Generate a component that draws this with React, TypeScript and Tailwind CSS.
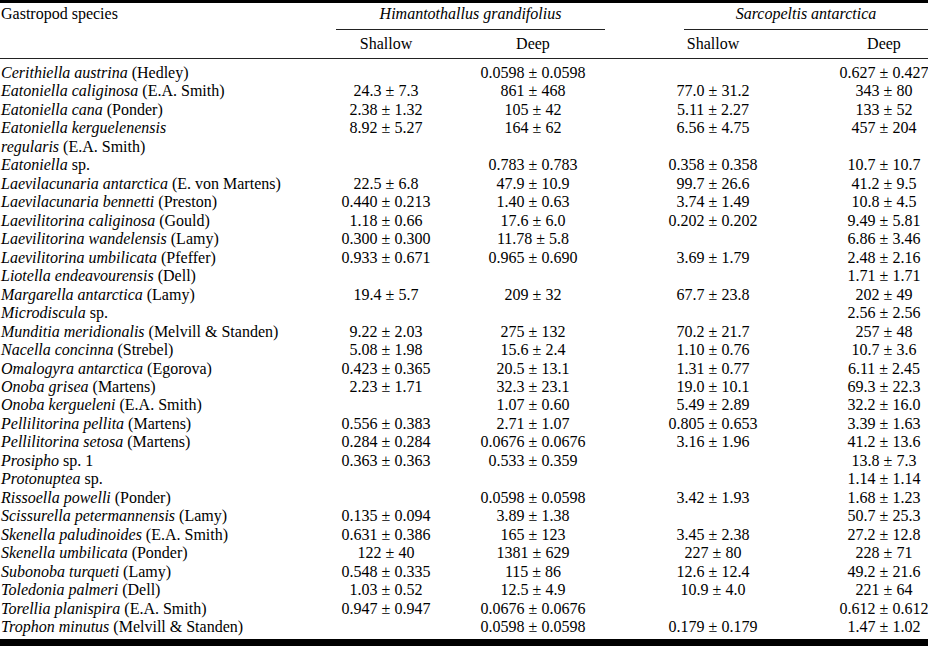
import React from "react";

type Row = { g: React.ReactNode; a: string; b: string; c: string; d: string };

const I = ({ children }: { children: React.ReactNode }) => <i>{children}</i>;

const rows: Row[] = [
  { g: <><I>Cerithiella austrina</I> (Hedley)</>, a: "", b: "0.0598 ± 0.0598", c: "", d: "0.627 ± 0.427" },
  { g: <><I>Eatoniella caliginosa</I> (E.A. Smith)</>, a: "24.3 ± 7.3", b: "861 ± 468", c: "77.0 ± 31.2", d: "343 ± 80" },
  { g: <><I>Eatoniella cana</I> (Ponder)</>, a: "2.38 ± 1.32", b: "105 ± 42", c: "5.11 ± 2.27", d: "133 ± 52" },
  { g: <><I>Eatoniella kerguelenensis</I><br /><I>regularis</I> (E.A. Smith)</>, a: "8.92 ± 5.27", b: "164 ± 62", c: "6.56 ± 4.75", d: "457 ± 204" },
  { g: <><I>Eatoniella</I> sp.</>, a: "", b: "0.783 ± 0.783", c: "0.358 ± 0.358", d: "10.7 ± 10.7" },
  { g: <><I>Laevilacunaria antarctica</I> (E. von Martens)</>, a: "22.5 ± 6.8", b: "47.9 ± 10.9", c: "99.7 ± 26.6", d: "41.2 ± 9.5" },
  { g: <><I>Laevilacunaria bennetti</I> (Preston)</>, a: "0.440 ± 0.213", b: "1.40 ± 0.63", c: "3.74 ± 1.49", d: "10.8 ± 4.5" },
  { g: <><I>Laevilitorina caliginosa</I> (Gould)</>, a: "1.18 ± 0.66", b: "17.6 ± 6.0", c: "0.202 ± 0.202", d: "9.49 ± 5.81" },
  { g: <><I>Laevilitorina wandelensis</I> (Lamy)</>, a: "0.300 ± 0.300", b: "11.78 ± 5.8", c: "", d: "6.86 ± 3.46" },
  { g: <><I>Laevilitorina umbilicata</I> (Pfeffer)</>, a: "0.933 ± 0.671", b: "0.965 ± 0.690", c: "3.69 ± 1.79", d: "2.48 ± 2.16" },
  { g: <><I>Liotella endeavourensis</I> (Dell)</>, a: "", b: "", c: "", d: "1.71 ± 1.71" },
  { g: <><I>Margarella antarctica</I> (Lamy)</>, a: "19.4 ± 5.7", b: "209 ± 32", c: "67.7 ± 23.8", d: "202 ± 49" },
  { g: <><I>Microdiscula</I> sp.</>, a: "", b: "", c: "", d: "2.56 ± 2.56" },
  { g: <><I>Munditia meridionalis</I> (Melvill &amp; Standen)</>, a: "9.22 ± 2.03", b: "275 ± 132", c: "70.2 ± 21.7", d: "257 ± 48" },
  { g: <><I>Nacella concinna</I> (Strebel)</>, a: "5.08 ± 1.98", b: "15.6 ± 2.4", c: "1.10 ± 0.76", d: "10.7 ± 3.6" },
  { g: <><I>Omalogyra antarctica</I> (Egorova)</>, a: "0.423 ± 0.365", b: "20.5 ± 13.1", c: "1.31 ± 0.77", d: "6.11 ± 2.45" },
  { g: <><I>Onoba grisea</I> (Martens)</>, a: "2.23 ± 1.71", b: "32.3 ± 23.1", c: "19.0 ± 10.1", d: "69.3 ± 22.3" },
  { g: <><I>Onoba kergueleni</I> (E.A. Smith)</>, a: "", b: "1.07 ± 0.60", c: "5.49 ± 2.89", d: "32.2 ± 16.0" },
  { g: <><I>Pellilitorina pellita</I> (Martens)</>, a: "0.556 ± 0.383", b: "2.71 ± 1.07", c: "0.805 ± 0.653", d: "3.39 ± 1.63" },
  { g: <><I>Pellilitorina setosa</I> (Martens)</>, a: "0.284 ± 0.284", b: "0.0676 ± 0.0676", c: "3.16 ± 1.96", d: "41.2 ± 13.6" },
  { g: <><I>Prosipho</I> sp. 1</>, a: "0.363 ± 0.363", b: "0.533 ± 0.359", c: "", d: "13.8 ± 7.3" },
  { g: <><I>Protonuptea</I> sp.</>, a: "", b: "", c: "", d: "1.14 ± 1.14" },
  { g: <><I>Rissoella powelli</I> (Ponder)</>, a: "", b: "0.0598 ± 0.0598", c: "3.42 ± 1.93", d: "1.68 ± 1.23" },
  { g: <><I>Scissurella petermannensis</I> (Lamy)</>, a: "0.135 ± 0.094", b: "3.89 ± 1.38", c: "", d: "50.7 ± 25.3" },
  { g: <><I>Skenella paludinoides</I> (E.A. Smith)</>, a: "0.631 ± 0.386", b: "165 ± 123", c: "3.45 ± 2.38", d: "27.2 ± 12.8" },
  { g: <><I>Skenella umbilicata</I> (Ponder)</>, a: "122 ± 40", b: "1381 ± 629", c: "227 ± 80", d: "228 ± 71" },
  { g: <><I>Subonoba turqueti</I> (Lamy)</>, a: "0.548 ± 0.335", b: "115 ± 86", c: "12.6 ± 12.4", d: "49.2 ± 21.6" },
  { g: <><I>Toledonia palmeri</I> (Dell)</>, a: "1.03 ± 0.52", b: "12.5 ± 4.9", c: "10.9 ± 4.0", d: "221 ± 64" },
  { g: <><I>Torellia planispira</I> (E.A. Smith)</>, a: "0.947 ± 0.947", b: "0.0676 ± 0.0676", c: "", d: "0.612 ± 0.612" },
  { g: <><I>Trophon minutus</I> (Melvill &amp; Standen)</>, a: "", b: "0.0598 ± 0.0598", c: "0.179 ± 0.179", d: "1.47 ± 1.02" },
];

const Num = ({ v }: { v: string }) => (
  <div className="flex justify-center whitespace-nowrap">{v}</div>
);

const cols = "grid grid-cols-[292px_188px_106px_254px_88px]";

export default function App() {
  return (
    <div
      className="w-[928px] h-[646px] bg-white text-black border-t-[3px] border-b-[7px] border-black text-[16px] leading-[18.47px] overflow-hidden"
      style={{ fontFamily: '"Liberation Serif", "Times New Roman", serif' }}
    >
      {/* group header */}
      <div className="flex h-[27px] pt-[2px]">
        <div className="w-[336px] pl-[1px]">Gastropod species</div>
        <div className="w-[269px] flex flex-col">
          <div className="text-center italic">Himantothallus grandifolius</div>
          <div className="mt-auto h-[1px] bg-[#222]" />
        </div>
        <div className="w-[79px]" />
        <div className="flex-1 flex flex-col">
          <div className="text-center italic">Sarcopeltis antarctica</div>
          <div className="mt-auto h-[1px] bg-[#222]" />
        </div>
      </div>
      {/* sub header */}
      <div className={`${cols} h-[29px] pt-[5px] border-b border-[#222]`}>
        <div />
        <Num v="Shallow" />
        <Num v="Deep" />
        <Num v="Shallow" />
        <Num v="Deep" />
      </div>
      {/* body */}
      <div className="pt-[5px]">
        {rows.map((r, i) => (
          <div key={i} className={`${cols} items-start`}>
            <div className="pl-[1px] whitespace-nowrap">{r.g}</div>
            <Num v={r.a} />
            <Num v={r.b} />
            <Num v={r.c} />
            <Num v={r.d} />
          </div>
        ))}
      </div>
    </div>
  );
}
